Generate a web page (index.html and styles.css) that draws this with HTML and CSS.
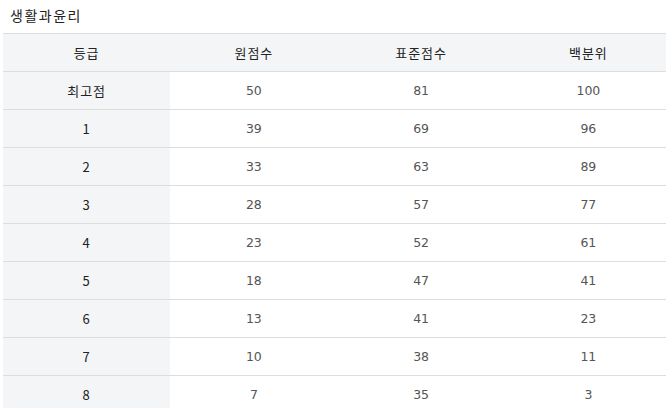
FILE: index.html
```html
<!DOCTYPE html>
<html lang="ko">
<head>
<meta charset="utf-8">
<link rel="stylesheet" href="styles.css">
</head>
<body>
<div class="page">
  <h2 class="title">생활과윤리</h2>
  <table class="grade-table">
    <thead>
      <tr><th>등급</th><th>원점수</th><th>표준점수</th><th>백분위</th></tr>
    </thead>
    <tbody>
      <tr><th>최고점</th><td>50</td><td>81</td><td>100</td></tr>
      <tr><th>1</th><td>39</td><td>69</td><td>96</td></tr>
      <tr><th>2</th><td>33</td><td>63</td><td>89</td></tr>
      <tr><th>3</th><td>28</td><td>57</td><td>77</td></tr>
      <tr><th>4</th><td>23</td><td>52</td><td>61</td></tr>
      <tr><th>5</th><td>18</td><td>47</td><td>41</td></tr>
      <tr><th>6</th><td>13</td><td>41</td><td>23</td></tr>
      <tr><th>7</th><td>10</td><td>38</td><td>11</td></tr>
      <tr><th>8</th><td>7</td><td>35</td><td>3</td></tr>
    </tbody>
  </table>
</div>
</body>
</html>
```

FILE: styles.css
```css
html, body {
  margin: 0;
  padding: 0;
  overflow: hidden;
  background: #fff;
}
body {
  font-family: "Noto Sans CJK KR", "Noto Sans", sans-serif;
  color: #222;
}
.page {
  padding: 5px 0 0 3px;
}
.title {
  margin: 0 0 8px 7px;
  font-size: 14px;
  font-weight: normal;
  line-height: 20px;
  letter-spacing: 1.5px;
  color: #222;
}
.grade-table {
  width: 669px;
  border-collapse: collapse;
  table-layout: fixed;
  font-size: 13px;
}
.grade-table th,
.grade-table td {
  height: 37px;
  padding: 0;
  text-align: center;
  vertical-align: middle;
  border-top: 1px solid #dddddd;
  border-bottom: 1px solid #dddddd;
  font-weight: normal;
}
.grade-table th {
  background: #f4f5f7;
  color: #222;
  letter-spacing: 1px;
}
.grade-table td {
  color: #555;
  font-family: "DejaVu Sans", sans-serif;
  font-size: 12.5px;
}
```
